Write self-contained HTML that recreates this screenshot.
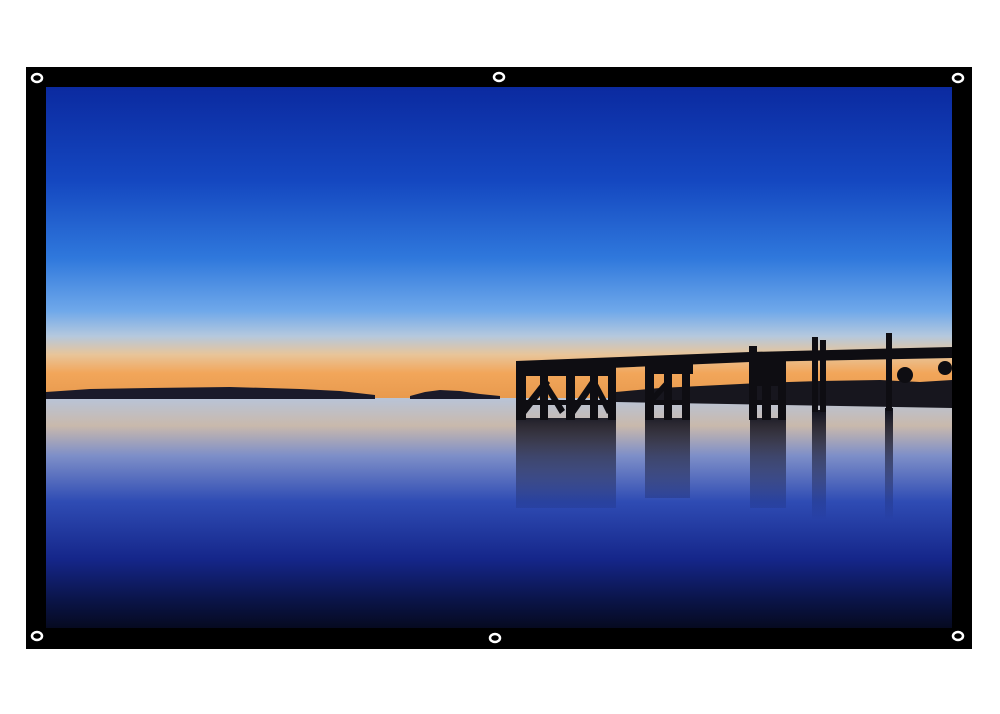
<!DOCTYPE html>
<html><head><style>
html,body{margin:0;padding:0;background:#fff;width:1000px;height:714px;overflow:hidden}
</style></head><body>
<svg width="1000" height="714" viewBox="0 0 1000 714" xmlns="http://www.w3.org/2000/svg">
<defs>
<linearGradient id="sky" x1="0" y1="87" x2="0" y2="398" gradientUnits="userSpaceOnUse">
<stop offset="0" stop-color="#0b2aa0"/>
<stop offset="0.3" stop-color="#1447c0"/>
<stop offset="0.55" stop-color="#2f78dc"/>
<stop offset="0.72" stop-color="#6fa8ea"/>
<stop offset="0.8" stop-color="#b4c8de"/>
<stop offset="0.86" stop-color="#e8c59a"/>
<stop offset="0.92" stop-color="#f2a65a"/>
<stop offset="1" stop-color="#e89a4e"/>
</linearGradient>
<linearGradient id="water" x1="0" y1="398" x2="0" y2="628" gradientUnits="userSpaceOnUse">
<stop offset="0" stop-color="#b8c4d8"/>
<stop offset="0.12" stop-color="#c9b9ac"/>
<stop offset="0.25" stop-color="#7e8fc8"/>
<stop offset="0.45" stop-color="#2f4cb4"/>
<stop offset="0.7" stop-color="#15268a"/>
<stop offset="0.88" stop-color="#0a1448"/>
<stop offset="1" stop-color="#060a20"/>
</linearGradient>
<linearGradient id="refl" x1="0" y1="410" x2="0" y2="520" gradientUnits="userSpaceOnUse">
<stop offset="0" stop-color="#0a0a14" stop-opacity="0.95"/>
<stop offset="1" stop-color="#0a0a30" stop-opacity="0"/>
</linearGradient>
</defs>
<rect x="26" y="67" width="946" height="582" fill="#000"/>
<rect x="46" y="87" width="906" height="311" fill="url(#sky)"/>
<rect x="46" y="398" width="906" height="230" fill="url(#water)"/>
<!-- land -->
<path d="M46 392 L90 389 L150 388 L230 387 L300 389 L340 391 L375 395 L375 399 L46 399Z" fill="#1a1a2a"/>
<path d="M410 396 L425 392 L440 390 L460 391 L480 394 L500 396 L500 399 L410 399Z" fill="#1a1a2a"/>
<path d="M616 392 L660 388 L720 385 L760 383 L820 381 L880 380 L920 382 L952 380 L952 408 L616 402Z" fill="#17161e"/>
<!-- reflections -->
<g fill="url(#refl)">
<rect x="516" y="418" width="100" height="90"/>
<rect x="645" y="418" width="45" height="80"/>
<rect x="750" y="418" width="36" height="90"/>
<rect x="812" y="410" width="14" height="110"/>
<rect x="885" y="408" width="8" height="120"/>
</g>
<!-- pier -->
<g fill="#0e0d12">
<path d="M516 361 L750 352 L952 347 L952 358 L750 362 L516 372Z"/>
<rect x="516" y="362" width="100" height="14"/>
<rect x="516" y="370" width="10" height="50"/>
<rect x="540" y="372" width="8" height="48"/>
<rect x="566" y="372" width="9" height="48"/>
<rect x="590" y="372" width="8" height="48"/>
<rect x="608" y="370" width="8" height="50"/>
<path d="M520 410 L545 378 L550 383 L526 414Z"/>
<path d="M546 380 L565 410 L560 414 L542 384Z"/>
<path d="M570 410 L592 378 L597 383 L575 414Z"/>
<path d="M596 380 L612 410 L607 414 L592 384Z"/>
<rect x="516" y="400" width="100" height="5"/>
<rect x="645" y="360" width="48" height="14"/>
<rect x="645" y="370" width="9" height="50"/>
<rect x="664" y="370" width="8" height="50"/>
<rect x="682" y="370" width="8" height="50"/>
<path d="M648 400 L668 378 L672 382 L652 404Z"/>
<rect x="645" y="400" width="45" height="5"/>
<rect x="749" y="346" width="8" height="74"/>
<rect x="750" y="356" width="36" height="30"/>
<rect x="762" y="380" width="9" height="40"/>
<rect x="778" y="380" width="8" height="40"/>
<rect x="750" y="400" width="36" height="5"/>
<rect x="812" y="337" width="6" height="75"/>
<rect x="820" y="340" width="6" height="72"/>
<rect x="886" y="333" width="6" height="78"/>
<circle cx="905" cy="375" r="8"/>
<circle cx="945" cy="368" r="7"/>
</g>
<!-- grommets -->
<g fill="none" stroke="#fff" stroke-width="2.5">
<ellipse cx="37" cy="78" rx="5" ry="4"/>
<ellipse cx="499" cy="77" rx="5" ry="4"/>
<ellipse cx="958" cy="78" rx="5" ry="4"/>
<ellipse cx="37" cy="636" rx="5" ry="4"/>
<ellipse cx="495" cy="638" rx="5" ry="4"/>
<ellipse cx="958" cy="636" rx="5" ry="4"/>
</g>
</svg>
</body></html>
